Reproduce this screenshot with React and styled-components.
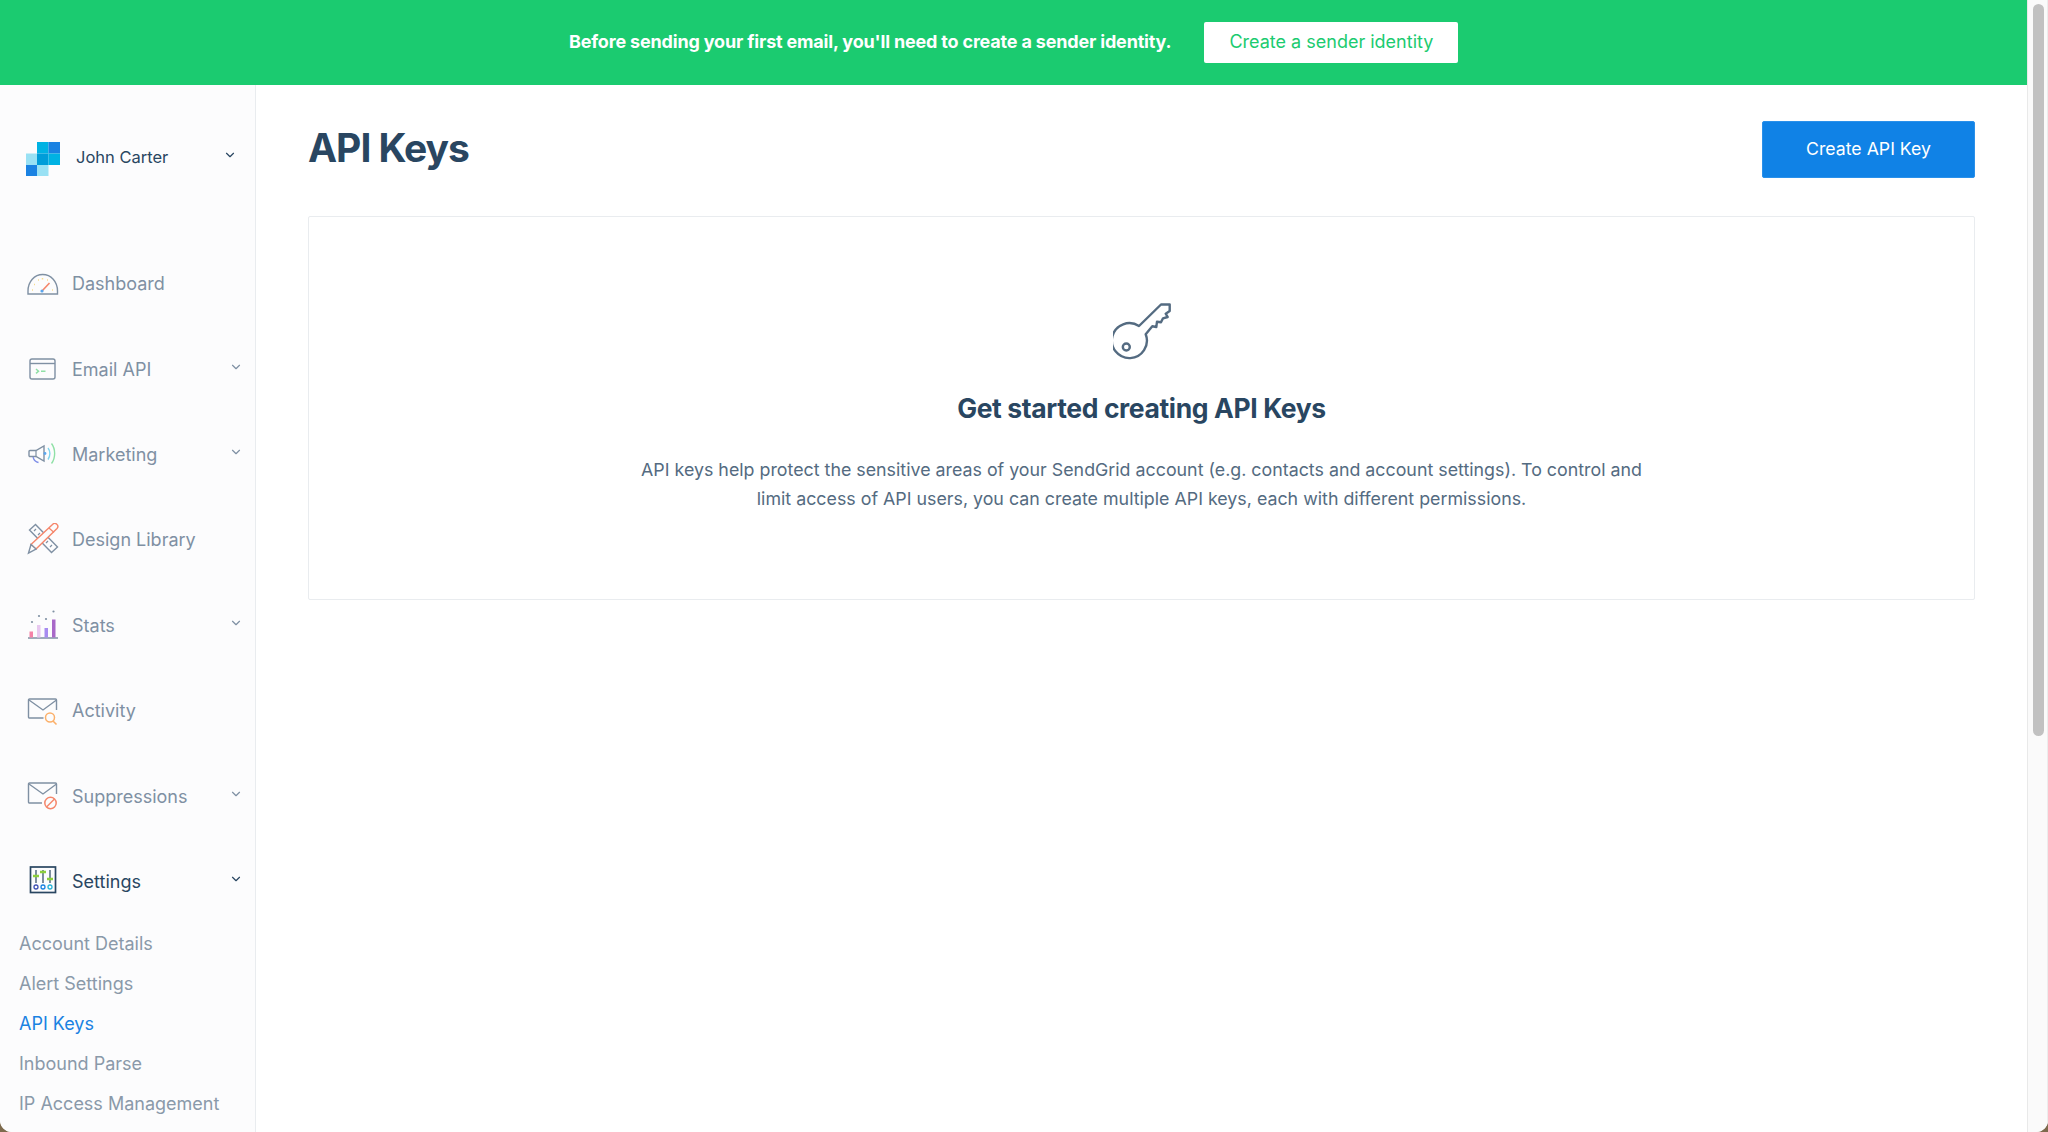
import React from "react";
import styled, { createGlobalStyle } from "styled-components";
import { ChevronDown } from "lucide-react";

const GlobalStyle = createGlobalStyle`
  html, body {
    margin: 0;
    padding: 0;
    height: 1132px;
    overflow: hidden;
    background: #7d6a4d;
    font-family: Inter, "Noto Sans", sans-serif;
  }
  * { box-sizing: border-box; }
`;

const Win = styled.div`
  width: 2048px;
  height: 1132px;
  display: flex;
  overflow: hidden;
  background: #fff;
  border-radius: 0 0 12px 12px;
`;

const Main = styled.div`
  width: 2027px;
  display: flex;
  flex-direction: column;
`;

const Track = styled.div`
  width: 21px;
  padding: 4px 3px 0 5px;
  background: #fafafa;
  border-left: 1px solid #e9e9e9;
  border-right: 1px solid #ececec;
`;

const Thumb = styled.div`
  width: 11px;
  height: 732px;
  border-radius: 6px;
  background: #c1c1c1;
`;

const Banner = styled.div`
  height: 85px;
  flex: none;
  background: #1bcb70;
  display: flex;
  align-items: center;
  padding: 0 0 0 569px;
  gap: 33px;
`;

const BannerText = styled.div`
  color: #fff;
  font-size: 18px;
  font-weight: 700;
  letter-spacing: -0.18px;
  margin-top: -2px;
`;

const BannerButton = styled.button`
  width: 254px;
  height: 41px;
  background: #fff;
  border: 0;
  border-radius: 2px;
  color: #1bcb70;
  font: 400 18px Inter, sans-serif;
  padding: 0 0 2px;
`;

const Body = styled.div`
  flex: 1;
  display: flex;
  min-height: 0;
`;

const Sidebar = styled.nav`
  width: 256px;
  flex: none;
  background: #fcfcfd;
  border-right: 1px solid #e9ecef;
  overflow: hidden;
`;

const Account = styled.div`
  display: flex;
  align-items: center;
  height: 35px;
  margin: 56px 0 0 25px;
  padding-right: 18px;
`;

const AccountName = styled.span`
  margin: -3px 0 0 15px;
  flex: 1;
  font-size: 16.5px;
  color: #294661;
`;

const Menu = styled.div`
  margin-top: 65px;
`;

const Item = styled.div`
  height: 85.4px;
  padding: 0 12px 0 27px;
  display: flex;
  align-items: center;
  color: ${(p) => (p.$active ? "#294661" : "#7f90a3")};
  font-size: 18px;
`;

const IconBox = styled.span`
  width: 32px;
  height: 32px;
  flex: none;
  margin: -2px 13px 0 0;
  display: block;
  svg { display: block; }
`;

const ItemLabel = styled.span`
  flex: 1;
`;

const Caret = styled(ChevronDown)`
  width: 14px;
  height: 14px;
  flex: none;
  margin-top: -5px;
  color: ${(p) => (p.$active ? "#294661" : "#7f90a3")};
`;

const AccountCaret = styled(Caret)`
  margin-top: -7px;
  color: #294661;
`;

const SubMenu = styled.div`
  padding-left: 19px;
`;

const SubItem = styled.div`
  height: 40px;
  line-height: 40px;
  font-size: 18px;
  color: ${(p) => (p.$active ? "#1a82e2" : "#8a99a9")};
`;

const Content = styled.main`
  flex: 1;
  padding: 36px 52px 0;
`;

const Header = styled.div`
  display: flex;
  justify-content: space-between;
  align-items: center;
  height: 56px;
`;

const Title = styled.h1`
  margin: -4px 0 0;
  font-size: 39px;
  font-weight: 700;
  letter-spacing: -1px;
  color: #294661;
`;

const PrimaryButton = styled.button`
  width: 213px;
  height: 57px;
  background: #1082e6;
  border: 1px solid #2a90ea;
  border-radius: 2px;
  color: #fff;
  font: 400 17.7px Inter, sans-serif;
  padding: 0 0 2px;
`;

const Card = styled.section`
  margin-top: 39px;
  height: 384px;
  border: 1px solid #e9ecef;
  border-radius: 2px;
  background: #fff;
  display: flex;
  flex-direction: column;
  align-items: center;
  padding-top: 86px;
`;

const CardTitle = styled.h2`
  margin: 29px 0 0;
  font-size: 26.5px;
  font-weight: 700;
  line-height: 36px;
  letter-spacing: -0.38px;
  color: #294661;
`;

const CardText = styled.p`
  margin: 30px 0 0;
  width: 1040px;
  text-align: center;
  font-size: 17.82px;
  line-height: 28.5px;
  color: #546b81;
`;

const LogoSvg = styled.svg`
  flex: none;
`;

const Logo = () => (
  <LogoSvg width="36" height="36" viewBox="0 0 36 36">
    <rect x="12" y="1" width="11.5" height="11.5" fill="#00b2e3" />
    <rect x="23.5" y="1" width="11.5" height="11.5" fill="#1a82e2" />
    <rect x="1" y="12.5" width="11" height="11.5" fill="#99e1f4" />
    <rect x="12" y="12.5" width="11.5" height="11.5" fill="#009dd9" />
    <rect x="23.5" y="12.5" width="11.5" height="11.5" fill="#00b2e3" />
    <rect x="1" y="24" width="11" height="11" fill="#1a82e2" />
    <rect x="12" y="24" width="11.5" height="11" fill="#99e1f4" />
  </LogoSvg>
);

const gray = "#7f90a3";

const GaugeIcon = () => (
  <svg width="32" height="32" viewBox="0 0 32 32" fill="none">
    <path d="M1 27h29.500v-3C30.500 14.500 24 7.500 15.700 7.500S1 14.500 1 24z" stroke={gray} strokeWidth="1.4" />
    <path d="M15.500 23.500l7-7.500" stroke="#f5866b" strokeWidth="1.600" />
    <circle cx="15" cy="24" r="1.600" fill="#5aa6ee" />
    <path d="M5 23h1M7 17.500h1M11 13h1M15.500 11v1.500M20 13h1M25 23h1" stroke="#f9dd8f" strokeWidth="1.500" />
  </svg>
);

const ApiIcon = () => (
  <svg width="32" height="32" viewBox="0 0 32 32" fill="none">
    <rect x="3" y="7" width="25" height="20" rx="2" stroke={gray} strokeWidth="1.4" />
    <path d="M3 11.500h25" stroke={gray} strokeWidth="1.4" />
    <path d="M9 17l2.500 2.200-2.500 2.200M14 19.200h4.500" stroke="#8fe0a6" strokeWidth="1.500" />
  </svg>
);

const MegaphoneIcon = () => (
  <svg width="32" height="32" viewBox="0 -2 32 32" fill="none">
    <path d="M3 11.500h6l8-4.500v15l-8-4.500H3a1 1 0 0 1-1-1V12.500a1 1 0 0 1 1-1z" stroke={gray} strokeWidth="1.4" />
    <path d="M9 11.500v6" stroke={gray} strokeWidth="1.200" />
    <path d="M6 18c.8 3 2.500 5 5.500 5.500" stroke="#7c8ce8" strokeWidth="1.300" />
    <circle cx="18" cy="14.500" r="1.400" fill="#5aa6ee" />
    <path d="M21 9c2.500 3 2.500 8 0 11.500" stroke="#7fd4ee" strokeWidth="1.400" />
    <path d="M24.500 4.500c4.200 5.500 4.200 14.500 0 20" stroke="#8fe0a6" strokeWidth="1.400" />
  </svg>
);

const DesignIcon = () => (
  <svg width="32" height="32" viewBox="0 0 32 32" fill="none">
    <path d="M8.500 1.500L2.500 7 24.500 29.500 30.500 24z" stroke={gray} strokeWidth="1.400" />
    <path d="M9 6l-2 2M13 10l-2 2M21 18l-2 2M25 22l-2 2" stroke={gray} strokeWidth="1.200" />
    <path d="M25.500 1.500a3 3 0 0 1 4.500 4L9 26l-5-4.500z" fill="#fcfcfd" stroke="#f5866b" strokeWidth="1.400" />
    <path d="M22 5l5 4.500" stroke="#f5866b" strokeWidth="1.200" />
    <path d="M4 21.500L1.500 30l7.500-4z" fill="#fcfcfd" stroke={gray} strokeWidth="1.400" />
  </svg>
);

const StatsIcon = () => (
  <svg width="32" height="32" viewBox="0 0 32 32" fill="none">
    <path d="M1 30h30" stroke={gray} strokeWidth="1.500" />
    <rect x="2.500" y="23.500" width="3.500" height="6" fill="#f582a8" />
    <rect x="10" y="17" width="3.500" height="12.500" fill="#e8c8f0" />
    <rect x="17.500" y="20" width="3.500" height="9.500" fill="#a78bf0" />
    <rect x="25" y="11.500" width="3.500" height="18" fill="#a868c8" />
    <circle cx="5" cy="14" r="1.100" fill={gray} />
    <circle cx="12" cy="8" r="1.100" fill={gray} />
    <circle cx="19" cy="11" r="1.100" fill={gray} />
    <circle cx="26.500" cy="3.500" r="1.100" fill={gray} />
  </svg>
);

const ActivityIcon = () => (
  <svg width="32" height="32" viewBox="0 0 32 32" fill="none">
    <path d="M16.500 24H2.500a1 1 0 0 1-1-1V6a1 1 0 0 1 1-1h26a1 1 0 0 1 1 1v10" stroke={gray} strokeWidth="1.400" />
    <path d="M2 6l14 10L29.500 6" stroke={gray} strokeWidth="1.400" />
    <circle cx="23" cy="23.500" r="4.500" stroke="#fbb06a" strokeWidth="1.500" />
    <path d="M26 27l3.500 3.500" stroke="#fbb06a" strokeWidth="1.600" />
  </svg>
);

const SuppressIcon = () => (
  <svg width="32" height="32" viewBox="0 0 32 32" fill="none">
    <path d="M15 24H2.500a1 1 0 0 1-1-1V5a1 1 0 0 1 1-1h26a1 1 0 0 1 1 1v10" stroke={gray} strokeWidth="1.400" />
    <path d="M2 5l14 10L29.500 5" stroke={gray} strokeWidth="1.400" />
    <circle cx="23.500" cy="24" r="5.700" stroke="#f5866b" strokeWidth="1.500" />
    <path d="M19.500 28l8-8" stroke="#f5866b" strokeWidth="1.500" />
  </svg>
);

const SettingsIcon = () => (
  <svg width="32" height="32" viewBox="0 0 32 32" fill="none">
    <rect x="3.500" y="3" width="25" height="25.500" stroke="#294661" strokeWidth="1.700" />
    <path d="M9 6v13M16 6v13M23 6v13" stroke="#294661" strokeWidth="1.200" />
    <path d="M6 12h6M13 8h6M20 15h6" stroke="#8ccf3c" strokeWidth="2.400" />
    <circle cx="9" cy="23" r="2" stroke="#3f51b5" strokeWidth="1.300" />
    <circle cx="16" cy="23" r="2" stroke="#1a82e2" strokeWidth="1.300" />
    <circle cx="23" cy="23" r="2" stroke="#27b4d8" strokeWidth="1.300" />
  </svg>
);

const KeyIcon = () => (
  <svg width="58" height="58" viewBox="0 0 58 58" fill="none" stroke="#546b81" strokeWidth="2.400" strokeLinejoin="round">
    <path d="M26 23L48 1.500h8.700V8l-4 2.700 2 3.300L50 15.300l-2 4-4-.6-.7 5.300-4-.7-6.600 8A17.500 17.500 0 1 1 26 23z" />
    <circle cx="13.300" cy="44" r="3.500" />
  </svg>
);

const items = [
  { label: "Dashboard", icon: GaugeIcon },
  { label: "Email API", icon: ApiIcon, caret: true },
  { label: "Marketing", icon: MegaphoneIcon, caret: true },
  { label: "Design Library", icon: DesignIcon },
  { label: "Stats", icon: StatsIcon, caret: true },
  { label: "Activity", icon: ActivityIcon },
  { label: "Suppressions", icon: SuppressIcon, caret: true },
  { label: "Settings", icon: SettingsIcon, caret: true, active: true },
];

const subItems = ["Account Details", "Alert Settings", "API Keys", "Inbound Parse", "IP Access Management"];

export default function App() {
  return (
    <>
      <GlobalStyle />
      <Win>
        <Main>
          <Banner>
            <BannerText>Before sending your first email, you'll need to create a sender identity.</BannerText>
            <BannerButton>Create a sender identity</BannerButton>
          </Banner>
          <Body>
            <Sidebar>
              <Account>
                <Logo />
                <AccountName>John Carter</AccountName>
                <AccountCaret />
              </Account>
              <Menu>
                {items.map((it) => (
                  <Item key={it.label} $active={it.active}>
                    <IconBox><it.icon /></IconBox>
                    <ItemLabel>{it.label}</ItemLabel>
                    {it.caret && <Caret $active={it.active} />}
                  </Item>
                ))}
              </Menu>
              <SubMenu>
                {subItems.map((s) => (
                  <SubItem key={s} $active={s === "API Keys"}>{s}</SubItem>
                ))}
              </SubMenu>
            </Sidebar>
            <Content>
              <Header>
                <Title>API Keys</Title>
                <PrimaryButton>Create API Key</PrimaryButton>
              </Header>
              <Card>
                <KeyIcon />
                <CardTitle>Get started creating API Keys</CardTitle>
                <CardText>
                  API keys help protect the sensitive areas of your SendGrid account (e.g. contacts and account settings). To control and limit access of API users, you can create multiple API keys, each with different permissions.
                </CardText>
              </Card>
            </Content>
          </Body>
        </Main>
        <Track><Thumb /></Track>
      </Win>
    </>
  );
}
